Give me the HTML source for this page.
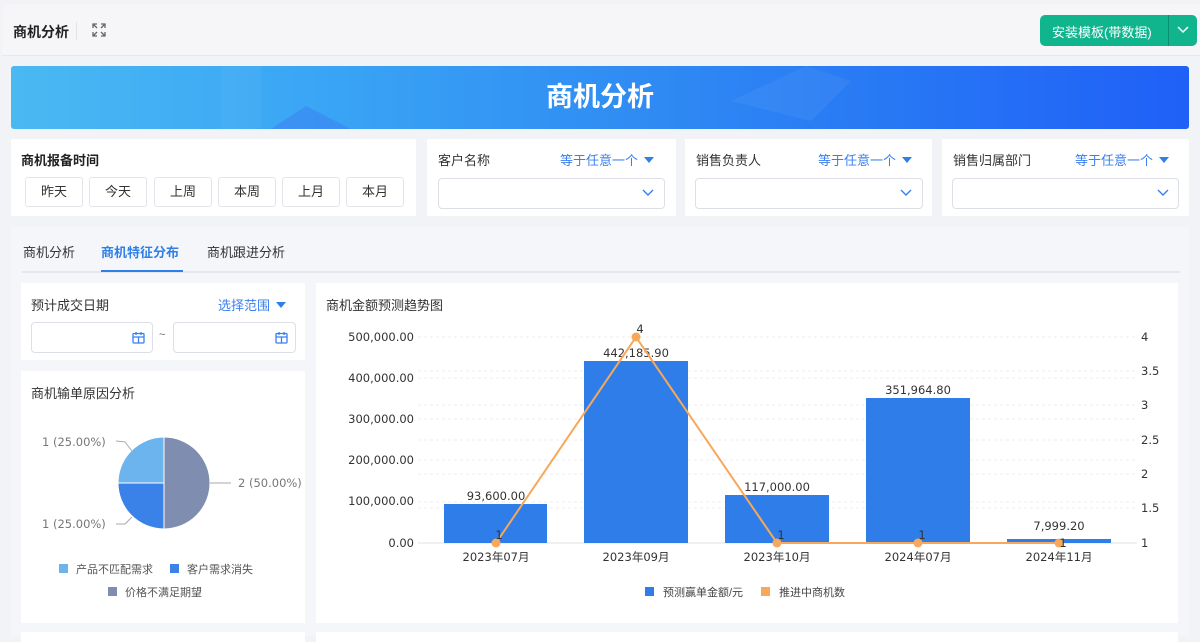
<!DOCTYPE html>
<html><head><meta charset="utf-8"><style>
*{box-sizing:border-box;margin:0;padding:0}
body{width:1200px;height:636px;overflow:hidden;background:#f2f3f7;font-family:"Liberation Sans","Noto Sans CJK SC",sans-serif;color:#333;position:relative}
.abs{position:absolute}
.card{position:absolute;background:#fff}
.btn{position:absolute;top:177px;width:58px;height:30px;border:1px solid #e3e5ea;border-radius:3px;font-size:13px;color:#333;text-align:center;line-height:28px;background:#fff}
.sel{position:absolute;height:31px;border:1px solid #dcdfe6;border-radius:4px;background:#fff}
.lbl{font-size:13px;color:#333}
.blue{color:#3a7ff0;font-size:13px}
.tri{display:inline-block;width:0;height:0;border-left:5px solid transparent;border-right:5px solid transparent;border-top:6px solid #2f7fe8;margin-left:6px;vertical-align:2px}
</style></head><body>
<div class="abs" style="left:2px;top:4px;width:1198px;height:52px;background:#f6f6f9;border-bottom:1px solid #e8e9ee;border-radius:6px 0 0 0"></div>
<div class="abs" style="left:13px;top:22px;font-size:14px;font-weight:bold;color:#222">商机分析</div>
<div class="abs" style="left:76px;top:22px;width:1px;height:18px;background:#e2e3e8"></div>
<svg class="abs" style="left:92px;top:23px" width="14" height="14" viewBox="0 0 14 14" fill="none" stroke="#666" stroke-width="1.3"><path d="M1 5V1h4M1 1l4 4M9 1h4v4M13 1L9 5M1 9v4h4M1 13l4-4M13 9v4H9M13 13L9 9"/></svg>
<div class="abs" style="left:1040px;top:15px;width:157px;height:31px;background:#10b58e;border-radius:5px"></div>
<div class="abs" style="left:1052px;top:22px;color:#fff;font-size:13px">安装模板(带数据)</div>
<div class="abs" style="left:1168px;top:15px;width:1px;height:31px;background:#0a8f6f"></div>
<svg class="abs" style="left:1177px;top:25px" width="12" height="10"><path d="M1 2l5 5 5-5" fill="none" stroke="#fff" stroke-width="1.5"/></svg>

<div class="abs" style="left:11px;top:66px;width:1178px;height:63px;border-radius:3px;background:linear-gradient(90deg,#4ab9f2 0%,#3aa6f5 25%,#2f8af3 55%,#1f60f7 100%);overflow:hidden">
<svg class="abs" style="left:0;top:0" width="1178" height="63"><path d="M260 63L295 40L340 63Z" fill="rgba(60,110,240,.35)"/><path d="M210 0H250V63H210Z" fill="rgba(255,255,255,.04)"/><path d="M720 35L795 0L840 15L800 55Z" fill="rgba(255,255,255,.05)"/></svg>
<div class="abs" style="left:0;top:0;width:1178px;height:63px;text-align:center;line-height:63px;color:#fff;font-size:27px;font-weight:bold">商机分析</div>
</div>

<div class="card" style="left:11px;top:139px;width:405px;height:77px"></div>
<div class="abs" style="left:21px;top:150px;font-size:13px;font-weight:bold;color:#222">商机报备时间</div>
<div class="btn" style="left:25px">昨天</div><div class="btn" style="left:89px">今天</div><div class="btn" style="left:154px">上周</div><div class="btn" style="left:218px">本周</div><div class="btn" style="left:282px">上月</div><div class="btn" style="left:346px">本月</div>

<div class="card" style="left:427px;top:139px;width:249px;height:77px"></div>
<div class="abs lbl" style="left:438px;top:150px">客户名称</div>
<div class="abs blue" style="left:560px;top:150px">等于任意一个<span class="tri"></span></div>
<div class="sel" style="left:438px;top:178px;width:227px"></div>
<svg class="abs" style="left:642px;top:189px" width="12" height="8"><path d="M1 1l5 5 5-5" fill="none" stroke="#3a7ff0" stroke-width="1.4"/></svg>

<div class="card" style="left:685px;top:139px;width:247px;height:77px"></div>
<div class="abs lbl" style="left:696px;top:150px">销售负责人</div>
<div class="abs blue" style="left:818px;top:150px">等于任意一个<span class="tri"></span></div>
<div class="sel" style="left:695px;top:178px;width:228px"></div>
<svg class="abs" style="left:900px;top:189px" width="12" height="8"><path d="M1 1l5 5 5-5" fill="none" stroke="#3a7ff0" stroke-width="1.4"/></svg>

<div class="card" style="left:942px;top:139px;width:247px;height:77px"></div>
<div class="abs lbl" style="left:953px;top:150px">销售归属部门</div>
<div class="abs blue" style="left:1075px;top:150px">等于任意一个<span class="tri"></span></div>
<div class="sel" style="left:952px;top:178px;width:227px"></div>
<svg class="abs" style="left:1157px;top:189px" width="12" height="8"><path d="M1 1l5 5 5-5" fill="none" stroke="#3a7ff0" stroke-width="1.4"/></svg>

<div class="abs" style="left:11px;top:227px;width:1178px;height:409px;background:#f5f6f9"></div>
<div class="abs" style="left:23px;top:242px;font-size:13px;color:#333">商机分析</div>
<div class="abs" style="left:101px;top:242px;font-size:13px;color:#2f7fe8;font-weight:bold">商机特征分布</div>
<div class="abs" style="left:207px;top:242px;font-size:13px;color:#333">商机跟进分析</div>
<div class="abs" style="left:22px;top:271px;width:1158px;height:2px;background:#e6e8ee"></div>
<div class="abs" style="left:101px;top:270px;width:82px;height:2px;background:#2f7fe8"></div>

<div class="card" style="left:21px;top:283px;width:284px;height:77px"></div>
<div class="abs lbl" style="left:31px;top:295px">预计成交日期</div>
<div class="abs blue" style="left:218px;top:295px">选择范围<span class="tri"></span></div>
<div class="sel" style="left:31px;top:322px;width:122px"></div>
<div class="sel" style="left:173px;top:322px;width:123px"></div>
<div class="abs" style="left:159px;top:329px;font-size:11px;color:#666">~</div>
<svg class="abs" style="left:132px;top:331px" width="13" height="13" fill="none" stroke="#3a7ff0" stroke-width="1.3"><rect x="1" y="2.5" width="11" height="9.5" rx="1"/><path d="M1 6h11M4 1v3M9 1v3M6.5 6v6"/></svg>
<svg class="abs" style="left:275px;top:331px" width="13" height="13" fill="none" stroke="#3a7ff0" stroke-width="1.3"><rect x="1" y="2.5" width="11" height="9.5" rx="1"/><path d="M1 6h11M4 1v3M9 1v3M6.5 6v6"/></svg>

<div class="card" style="left:21px;top:371px;width:284px;height:252px"></div>
<div class="abs lbl" style="left:31px;top:383px">商机输单原因分析</div>
<svg class="abs" style="left:21px;top:371px;overflow:hidden" width="284" height="252" font-family="DejaVu Sans, sans-serif">
<path d="M143 112 L143 66 A46 46 0 0 0 97 112 Z" fill="#6cb4ee" stroke="#fff" stroke-width="1"/>
<path d="M143 112 L97 112 A46 46 0 0 0 143 158 Z" fill="#3b82e8" stroke="#fff" stroke-width="1"/>
<path d="M143 112 L143 158 A46 46 0 0 0 143 66 Z" fill="#7f8db0" stroke="#fff" stroke-width="1"/>
<path d="M95 70 L104 71 L111 80" fill="none" stroke="#aaa"/>
<path d="M95 153 L104 153 L111 146" fill="none" stroke="#aaa"/>
<path d="M189 112 L210 112" fill="none" stroke="#aaa"/>
<text x="21" y="75" font-size="11.5" fill="#777">1 (25.00%)</text>
<text x="21" y="157" font-size="11.5" fill="#777">1 (25.00%)</text>
<text x="217" y="116" font-size="11.5" fill="#777">2 (50.00%)</text>
<g font-family="Liberation Sans, Noto Sans CJK SC, sans-serif">
<rect x="38" y="193" width="9" height="9" fill="#6cb4ee"/><text x="55" y="202" font-size="11" fill="#555">产品不匹配需求</text>
<rect x="149" y="193" width="9" height="9" fill="#3b82e8"/><text x="166" y="202" font-size="11" fill="#555">客户需求消失</text>
<rect x="87" y="216" width="9" height="9" fill="#7f8db0"/><text x="104" y="225" font-size="11" fill="#555">价格不满足期望</text></g>
</svg>

<div class="card" style="left:316px;top:283px;width:862px;height:340px"></div>
<div class="abs lbl" style="left:326px;top:295px">商机金额预测趋势图</div>
<svg class="abs" style="left:0;top:0" width="1200" height="636" font-family="DejaVu Sans, Noto Sans CJK SC, sans-serif" font-size="11.5">
<g stroke="#ebedf0" stroke-dasharray="3 3">
<path d="M418 337H1137M418 378H1137M418 419H1137M418 460H1137M418 502H1137M418 371H1137M418 405H1137M418 440H1137M418 474H1137M418 508H1137"/>
</g>
<path d="M418 543H1137" stroke="#dde0e6"/>
<g fill="#2f7de8">
<rect x="444" y="504" width="103" height="39"/>
<rect x="584" y="361" width="104" height="182"/>
<rect x="725" y="495" width="104" height="48"/>
<rect x="866" y="398" width="104" height="145"/>
<rect x="1007" y="539" width="104" height="4"/>
</g>
<g fill="#333" text-anchor="end">
<text x="414" y="341">500,000.00</text><text x="414" y="382">400,000.00</text><text x="414" y="423">300,000.00</text><text x="414" y="464">200,000.00</text><text x="414" y="505">100,000.00</text><text x="414" y="547">0.00</text>
</g>
<g fill="#333">
<text x="1141" y="341">4</text><text x="1141" y="375">3.5</text><text x="1141" y="409">3</text><text x="1141" y="444">2.5</text><text x="1141" y="478">2</text><text x="1141" y="512">1.5</text><text x="1141" y="547">1</text>
</g>
<g fill="#333" text-anchor="middle">
<text x="496" y="500">93,600.00</text><text x="636" y="357">442,185.90</text><text x="777" y="491">117,000.00</text><text x="918" y="394">351,964.80</text><text x="1059" y="530">7,999.20</text>
<text x="496" y="561">2023年07月</text><text x="636" y="561">2023年09月</text><text x="777" y="561">2023年10月</text><text x="918" y="561">2024年07月</text><text x="1059" y="561">2024年11月</text>
</g>
<polyline points="496,543 636,337 777,543 918,543 1059,543" fill="none" stroke="#f7a85a" stroke-width="2"/>
<g fill="#f7a85a"><circle cx="496" cy="543" r="4.5"/><circle cx="636" cy="337" r="4.5"/><circle cx="777" cy="543" r="4.5"/><circle cx="918" cy="543" r="4.5"/><circle cx="1059" cy="543" r="4.5"/></g>
<g fill="#333" text-anchor="middle"><text x="499" y="539">1</text><text x="640" y="333">4</text><text x="781" y="539">1</text><text x="922" y="539">1</text><text x="1063" y="547">1</text></g>
<g font-family="Liberation Sans, Noto Sans CJK SC, sans-serif">
<rect x="645" y="587" width="9" height="9" fill="#2f7de8"/><text x="663" y="596" font-size="11" fill="#444">预测赢单金额/元</text>
<rect x="761" y="587" width="9" height="9" fill="#f7a85a"/><text x="779" y="596" font-size="11" fill="#444">推进中商机数</text></g>
</svg>
<div class="card" style="left:21px;top:632px;width:284px;height:10px"></div>
<div class="card" style="left:316px;top:632px;width:862px;height:10px"></div>
</body></html>
